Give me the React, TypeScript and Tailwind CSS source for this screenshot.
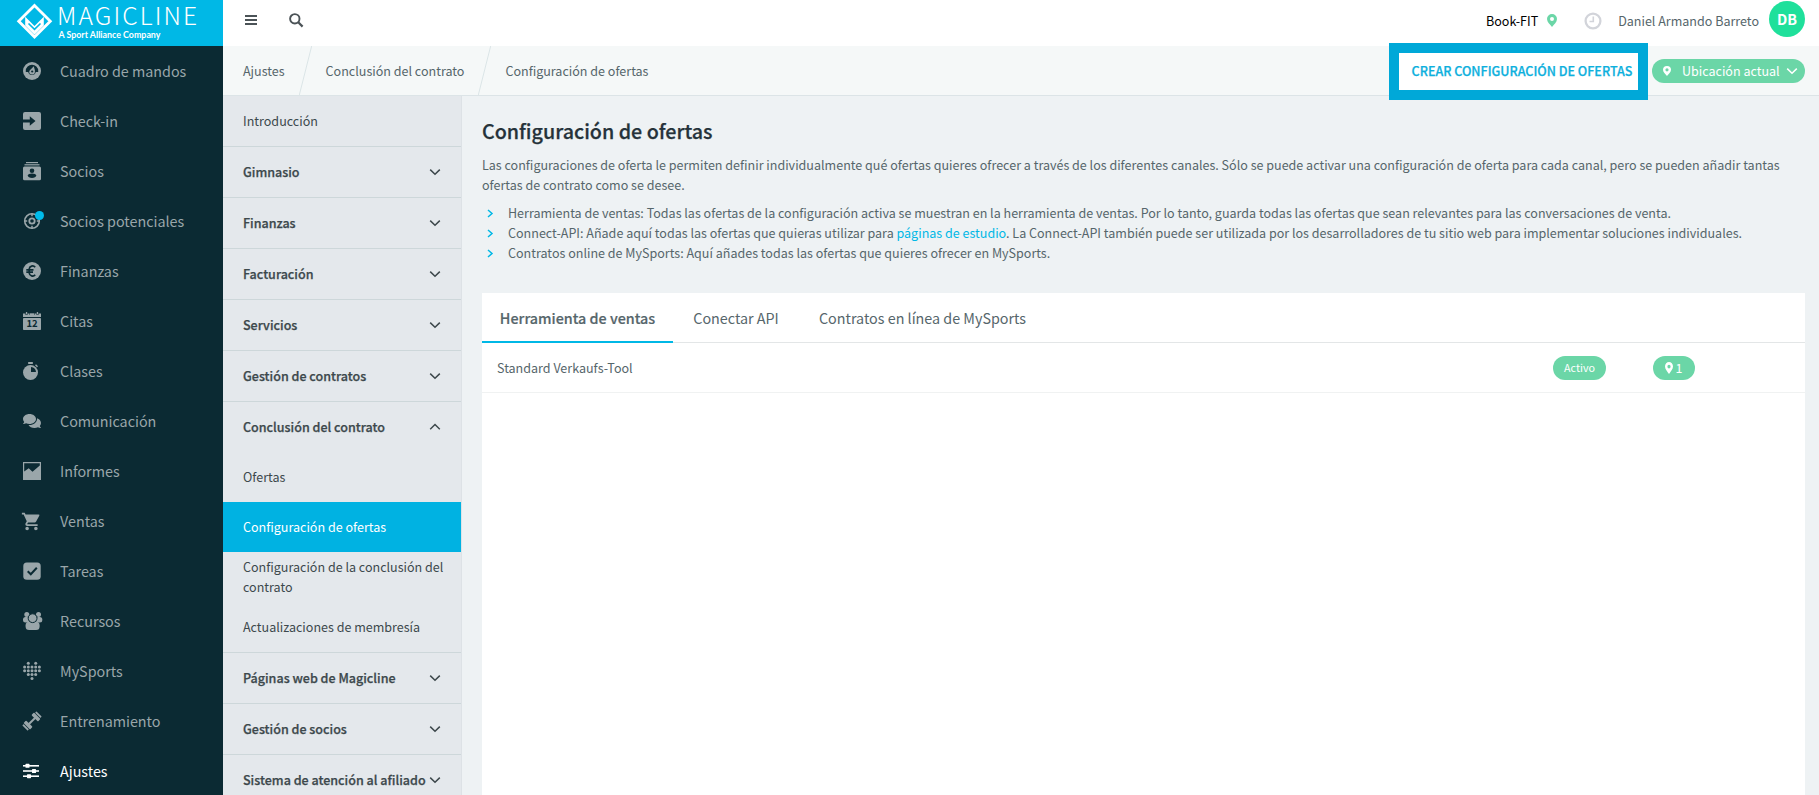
import type { ReactNode } from "react";
import { FaComments } from "react-icons/fa";
import { MdShoppingCart } from "react-icons/md";

const Chevron = ({ up = false }: { up?: boolean }) => (
  <svg width="12" height="8" viewBox="0 0 12 8" fill="none" className="shrink-0">
    <path
      d={up ? "M1.2 6.2 6 1.5l4.8 4.7" : "M1.2 1.6 6 6.3l4.8-4.7"}
      stroke="currentColor"
      strokeWidth="1.5"
    />
  </svg>
);

const Pin = ({ className = "" }: { className?: string }) => (
  <svg viewBox="0 0 10 13" preserveAspectRatio="none" className={className} fill="currentColor">
    <path
      fillRule="evenodd"
      d="M5 0a5 5 0 0 1 5 5c0 3-3 5.500-5 8C3 10.500 0 8 0 5a5 5 0 0 1 5-5Zm0 3a2 2 0 1 0 0 4 2 2 0 0 0 0-4Z"
    />
  </svg>
);

const Icon = ({ children }: { children: ReactNode }) => (
  <svg width="18" height="18" viewBox="0 0 18 18" fill="currentColor" className="overflow-visible">
    {children}
  </svg>
);

const BG = "#0b2a33";

const heartRows: { y: number; xs: number[] }[] = [
  { y: 1.2, xs: [5.3, 12.7] },
  { y: 5, xs: [1.6, 5.3, 9, 12.7, 16.4] },
  { y: 8.7, xs: [1.6, 5.3, 9, 12.7, 16.4] },
  { y: 12.4, xs: [5.3, 9, 12.7] },
  { y: 16.4, xs: [9] },
];

const menu = [
  {
    name: "Cuadro de mandos",
    icon: (
      <Icon>
        <circle cx="9" cy="9" r="9" />
        <path d="M2.800 10V9a6.200 6.200 0 0 1 12.400 0v1h-2.400a3.900 3.900 0 0 1-7.600 0Z" fill={BG} />
        <path d="M10.700 4.200c.8 2.500 1.500 4.300 1.200 5.600a2.800 2.800 0 1 1-5.500-.8c.6-1.300 2.600-2.800 4.300-4.800Z" />
        <circle cx="9.200" cy="9.500" r="1.100" fill={BG} />
      </Icon>
    ),
  },
  {
    name: "Check-in",
    icon: (
      <Icon>
        <rect width="18" height="18" rx="2" />
        <path d="M-.5 7.500h7.300V4.200L12.500 9l-5.700 4.800v-3.300H-.5Z" fill={BG} />
      </Icon>
    ),
  },
  {
    name: "Socios",
    icon: (
      <Icon>
        <rect x="3" y="0" width="12" height="1.200" />
        <rect x="1.500" y="2.200" width="15" height="1.200" />
        <rect y="4.400" width="18" height="13.800" rx="1.500" />
        <circle cx="9" cy="8.800" r="2.300" fill={BG} />
        <path d="M4.800 13.600c0-1.400 2-2.200 4.200-2.200s4.200.8 4.200 2.200S11.200 16 9 16s-4.200-1-4.200-2.400Z" fill={BG} />
      </Icon>
    ),
  },
  {
    name: "Socios potenciales",
    icon: (
      <Icon>
        <g fill="none" stroke="currentColor">
          <circle cx="9" cy="9" r="7.300" strokeWidth="1.600" />
          <circle cx="9" cy="9" r="2.700" strokeWidth="1.800" />
          <path d="M9 1v3.200M9 13.800V17M1 9h3.200M13.800 9H17" strokeWidth="1.500" />
        </g>
        <circle cx="16.500" cy="3.500" r="4.500" fill="#00bceb" />
      </Icon>
    ),
  },
  {
    name: "Finanzas",
    icon: (
      <Icon>
        <circle cx="9" cy="9" r="9" />
        <path
          d="M12.200 5.200A3.400 3.400 0 0 0 6.200 7v4a3.400 3.400 0 0 0 6 1.800M3.300 7.800h7.200M3.300 10.200h6.700"
          fill="none"
          stroke={BG}
          strokeWidth="1.700"
        />
      </Icon>
    ),
  },
  {
    name: "Citas",
    icon: (
      <Icon>
        <path d="M0 1.500h2.500V3h2V1.500h2V3h5V1.500h2V3h2V1.500H18V5H0Z" />
        <rect x="2.900" y="0" width="1.300" height="2.400" />
        <rect x="6.900" y="1.300" width="4.200" height="2" />
        <rect x="13.800" y="0" width="1.300" height="2.400" />
        <rect y="5.900" width="18" height="12.100" rx=".8" />
        <text
          x="9"
          y="15.200"
          textAnchor="middle"
          fill={BG}
          className="font-['Noto_Sans_CJK_SC',sans-serif] text-[9.5px] font-bold"
        >
          12
        </text>
      </Icon>
    ),
  },
  {
    name: "Clases",
    icon: (
      <Icon>
        <circle cx="7.500" cy="10.500" r="7.500" />
        <rect x="5" y="0" width="5" height="2" rx=".8" />
        <path d="m12 3.200 1-1 2 2-1 1Z" />
        <path d="M8 5v5h5a5.400 5.400 0 0 0-5-5Z" fill={BG} />
      </Icon>
    ),
  },
  { name: "Comunicación", icon: <FaComments className="size-[18px]" /> },
  {
    name: "Informes",
    icon: (
      <Icon>
        <path fillRule="evenodd" d="M0 0h18v18H0ZM1.200 1.200v8.300L5.700 6.300l3.800 3.500 7.300-6.300V1.200Z" />
      </Icon>
    ),
  },
  { name: "Ventas", icon: <MdShoppingCart className="-ml-0.5 size-[21px]" /> },
  {
    name: "Tareas",
    icon: (
      <Icon>
        <rect x=".3" y=".5" width="17.400" height="17.200" rx="3.500" />
        <path d="m4.700 9.200 3.100 3 6-6.400" fill="none" stroke={BG} strokeWidth="2" />
      </Icon>
    ),
  },
  {
    name: "Recursos",
    icon: (
      <Icon>
        <circle cx="3.800" cy="2.400" r="2.500" />
        <circle cx="15.500" cy="2.400" r="2.500" />
        <rect x="0" y="4.900" width="6.500" height="5.500" rx="2.500" />
        <rect x="12.800" y="4.900" width="6.500" height="5.500" rx="2.500" />
        <rect x="2.600" y="9.800" width="14" height="8.200" rx="3.500" />
        <circle cx="9.600" cy="6.200" r="4.400" stroke={BG} />
      </Icon>
    ),
  },
  {
    name: "MySports",
    icon: (
      <Icon>
        {heartRows.map(({ y, xs }) => xs.map((x) => <circle key={`${x}-${y}`} cx={x} cy={y} r="1.500" />))}
      </Icon>
    ),
  },
  {
    name: "Entrenamiento",
    icon: (
      <Icon>
        <g transform="rotate(-45 9 9)">
          <rect x="4" y="8" width="10" height="2" />
          <rect x="1.600" y="4.400" width="3.600" height="9.200" rx=".8" />
          <rect x="-1" y="5.200" width="1.900" height="7.600" rx=".6" />
          <rect x="12.800" y="4.400" width="3.600" height="9.200" rx=".8" />
          <rect x="17.100" y="5.200" width="1.900" height="7.600" rx=".6" />
        </g>
      </Icon>
    ),
  },
  {
    name: "Ajustes",
    active: true,
    icon: (
      <Icon>
        <rect y="3" width="16" height="1.600" />
        <rect y="8.200" width="16" height="1.600" />
        <rect y="13.400" width="16" height="1.600" />
        <rect x="2.500" y="1.800" width="4" height="4" rx=".6" />
        <rect x="9" y="7" width="4" height="4" rx=".6" />
        <rect x="4" y="12.200" width="4" height="4" rx=".6" />
      </Icon>
    ),
  },
];

const sections = [
  { name: "Gimnasio" },
  { name: "Finanzas" },
  { name: "Facturación" },
  { name: "Servicios" },
  { name: "Gestión de contratos" },
  {
    name: "Conclusión del contrato",
    items: [
      "Ofertas",
      "Configuración de ofertas",
      "Configuración de la conclusión del contrato",
      "Actualizaciones de membresía",
    ],
  },
  { name: "Páginas web de Magicline" },
  { name: "Gestión de socios" },
  { name: "Sistema de atención al afiliado" },
];

const crumbs = ["Ajustes", "Conclusión del contrato", "Configuración de ofertas"];

const Sidebar = () => (
  <aside className="w-[223px] shrink-0 bg-[#0b2a33] text-[#9aa6aa]">
    <div className="flex h-[46px] bg-[#00b8e6] pl-4 text-white">
      <svg width="37" height="37" viewBox="0 0 37 37" className="mt-[3px] shrink-0">
        <path d="M18.500 2.500 34.300 18.300 18.500 34.100 2.700 18.300Z" fill="none" stroke="currentColor" strokeWidth="2.800" />
        <path d="M9.200 13.800 18.500 23l9.300-9.200v8.700l-9.300 9.300-9.300-9.300Z" fill="currentColor" />
        <path d="m12.500 20.500 6 5.900 6-5.900" fill="none" stroke="#00b8e6" strokeWidth="1.600" />
      </svg>
      <div className="ml-[4px]">
        <p className="h-[31px] whitespace-nowrap text-[24.6px] font-light leading-[29px] tracking-[2.1px]">
          MAGICLINE
        </p>
        <p className="ml-[1.5px] whitespace-nowrap font-['Lato',sans-serif] text-[8.85px] font-bold leading-[7px]">
          A Sport Alliance Company
        </p>
      </div>
    </div>
    <nav className="text-[14.33px]">
      {menu.map((item) => (
        <a
          key={item.name}
          className={`flex h-[50px] items-center pl-[23px] ${item.active ? "text-white" : ""}`}
        >
          <span className="flex w-[37px] shrink-0 items-center">{item.icon}</span>
          <span>{item.name}</span>
        </a>
      ))}
    </nav>
  </aside>
);

const Header = () => (
  <header className="flex h-[46px] shrink-0 items-center bg-white pb-[5px] pl-[22px] pr-3.5 text-[#56666b]">
    <svg width="12" height="10" viewBox="0 0 12 10" fill="#4b5357" className="-mt-px">
      <path d="M0 0h12v2H0zM0 4h12v2H0zM0 8h12v2H0z" />
    </svg>
    <svg width="15" height="15" viewBox="0 0 15 15" className="-mt-px ml-8" fill="none" stroke="#4b5357">
      <circle cx="5.800" cy="5.800" r="4.700" strokeWidth="1.900" />
      <path d="m9 9 4.600 4.600" strokeWidth="2.200" />
    </svg>
    <div className="ml-auto flex items-center">
      <span className="pt-px text-black">Book-FIT</span>
      <Pin className="ml-[9px] h-[13px] w-[10px] text-[#6bd6a7]" />
      <svg width="18" height="18" viewBox="0 0 18 18" fill="none" stroke="#d2d4da" className="ml-[27px]">
        <circle cx="9" cy="9" r="7.400" strokeWidth="2.300" />
        <path d="M9.300 4.500v5H5.500" strokeWidth="1.600" />
      </svg>
      <span className="ml-4 pt-px">Daniel Armando Barreto</span>
      <span className="-mt-[3px] ml-2.5 flex size-9 items-center justify-center rounded-full bg-[#1fe09b] text-[14.33px] font-bold text-white">
        DB
      </span>
    </div>
  </header>
);

const Breadcrumbs = () => (
  <div className="flex h-[50px] shrink-0 items-center border-b border-[#dce4e7] bg-[#f5f8f8] pl-5 pr-3.5 text-[#56666b]">
    {crumbs.map((crumb, i) => (
      <div key={crumb} className="flex h-full items-center">
        {i > 0 && (
          <svg width="13" height="49" viewBox="0 0 13 49" className="mx-3.5" fill="none">
            <path d="M12.700 0 .3 49" stroke="#dbe5e7" />
          </svg>
        )}
        <span className="pt-px">{crumb}</span>
      </div>
    ))}
    <button className="relative z-10 ml-auto mt-px flex h-[57px] w-[259px] shrink-0 items-center justify-center border-[10px] border-[#00a8d8] bg-white pl-[7px] font-medium text-[#0db0dd] [-webkit-text-stroke:0.25px]">
      <span className="whitespace-nowrap">CREAR CONFIGURACIÓN DE OFERTAS</span>
    </button>
    <button className="ml-1 flex h-6 w-[153px] shrink-0 items-center rounded-full bg-[#6bd6a7] pl-[11px] text-white">
      <Pin className="h-[10px] w-[8px]" />
      <span className="ml-[11px] mr-1.5 whitespace-nowrap pt-px">Ubicación actual</span>
      <Chevron />
    </button>
  </div>
);

const SettingsNav = () => (
  <nav className="w-[239px] shrink-0 border-r border-[#dde2e6] bg-[#e4e8ec] text-[#3d484c]">
    <a className="flex h-[50px] items-center pl-5">Introducción</a>
    {sections.map(({ name, items }) => (
      <div key={name} className="border-t border-[#cdd7da]">
        <div className="flex h-[50px] items-center justify-between pl-5 pr-5 font-medium">
          <span className="whitespace-nowrap [-webkit-text-stroke:0.25px]">{name}</span>
          <Chevron up={!!items} />
        </div>
        {items?.map((item) => (
          <a
            key={item}
            className={`flex h-[50px] items-center pl-5 pr-3 leading-5 ${
              item === "Configuración de ofertas" ? "bg-[#00b2e2] text-white" : ""
            }`}
          >
            {item}
          </a>
        ))}
      </div>
    ))}
  </nav>
);

const Bullet = ({ children }: { children: ReactNode }) => (
  <li className="flex items-center">
    <svg width="7" height="9" viewBox="0 0 7 9" fill="none" className="ml-[5px] mr-3.5">
      <path d="m1 1 4 3.500L1 8" stroke="#00b8e6" strokeWidth="1.500" />
    </svg>
    <span>{children}</span>
  </li>
);

const Content = () => (
  <main className="flex min-w-0 flex-1 flex-col bg-[#eef2f4] pl-5 pr-3.5 text-[#56666b]">
    <h1 className="mt-[19px] text-[19.69px] font-medium leading-8 text-[#25323a] [-webkit-text-stroke:0.25px]">
      Configuración de ofertas
    </h1>
    <p className="mt-2 leading-5">
      Las configuraciones de oferta le permiten definir individualmente qué ofertas quieres ofrecer a través de los
      diferentes canales. Sólo se puede activar una configuración de oferta para cada canal, pero se pueden añadir tantas
      ofertas de contrato como se desee.
    </p>
    <ul className="mt-2 leading-5">
      <Bullet>
        Herramienta de ventas: Todas las ofertas de la configuración activa se muestran en la herramienta de ventas. Por
        lo tanto, guarda todas las ofertas que sean relevantes para las conversaciones de venta.
      </Bullet>
      <Bullet>
        Connect-API: Añade aquí todas las ofertas que quieras utilizar para{" "}
        <a className="text-[#00b8e6]">páginas de estudio</a>. La Connect-API también puede ser utilizada por los
        desarrolladores de tu sitio web para implementar soluciones individuales.
      </Bullet>
      <Bullet>Contratos online de MySports: Aquí añades todas las ofertas que quieres ofrecer en MySports.</Bullet>
    </ul>
    <section className="mt-[30px] flex-1 bg-white">
      <div className="flex h-[50px] border-b border-[#e3e6e7] text-[14.33px]">
        <button className="flex h-[50px] w-[191px] items-center justify-center border-b-2 border-[#00b8e6] pt-0.5 font-medium [-webkit-text-stroke:0.2px]">
          Herramienta de ventas
        </button>
        <button className="w-[126px]">Conectar API</button>
        <button className="w-[247px]">Contratos en línea de MySports</button>
      </div>
      <div className="flex h-[50px] items-center border-b border-[#f0f2f2] pl-[15px]">
        <span className="pt-px">Standard Verkaufs-Tool</span>
        <span className="ml-auto flex h-6 w-[53px] items-center justify-center rounded-full bg-[#6bd6a7] pt-px text-[10.74px] text-white">
          Activo
        </span>
        <span className="ml-[47px] mr-[110px] flex h-6 w-[42px] items-center justify-center gap-[3px] rounded-full bg-[#6bd6a7] pr-px text-white">
          <Pin className="h-3 w-2" />
          <span className="pt-px">1</span>
        </span>
      </div>
    </section>
  </main>
);

const App = () => {
  return (
    <div className="flex h-screen overflow-hidden font-['Noto_Sans_CJK_SC',sans-serif] text-[12.54px]">
      <Sidebar />
      <div className="flex min-w-0 flex-1 flex-col">
        <Header />
        <Breadcrumbs />
        <div className="flex min-h-0 flex-1">
          <SettingsNav />
          <Content />
        </div>
      </div>
    </div>
  );
};

export default App;
